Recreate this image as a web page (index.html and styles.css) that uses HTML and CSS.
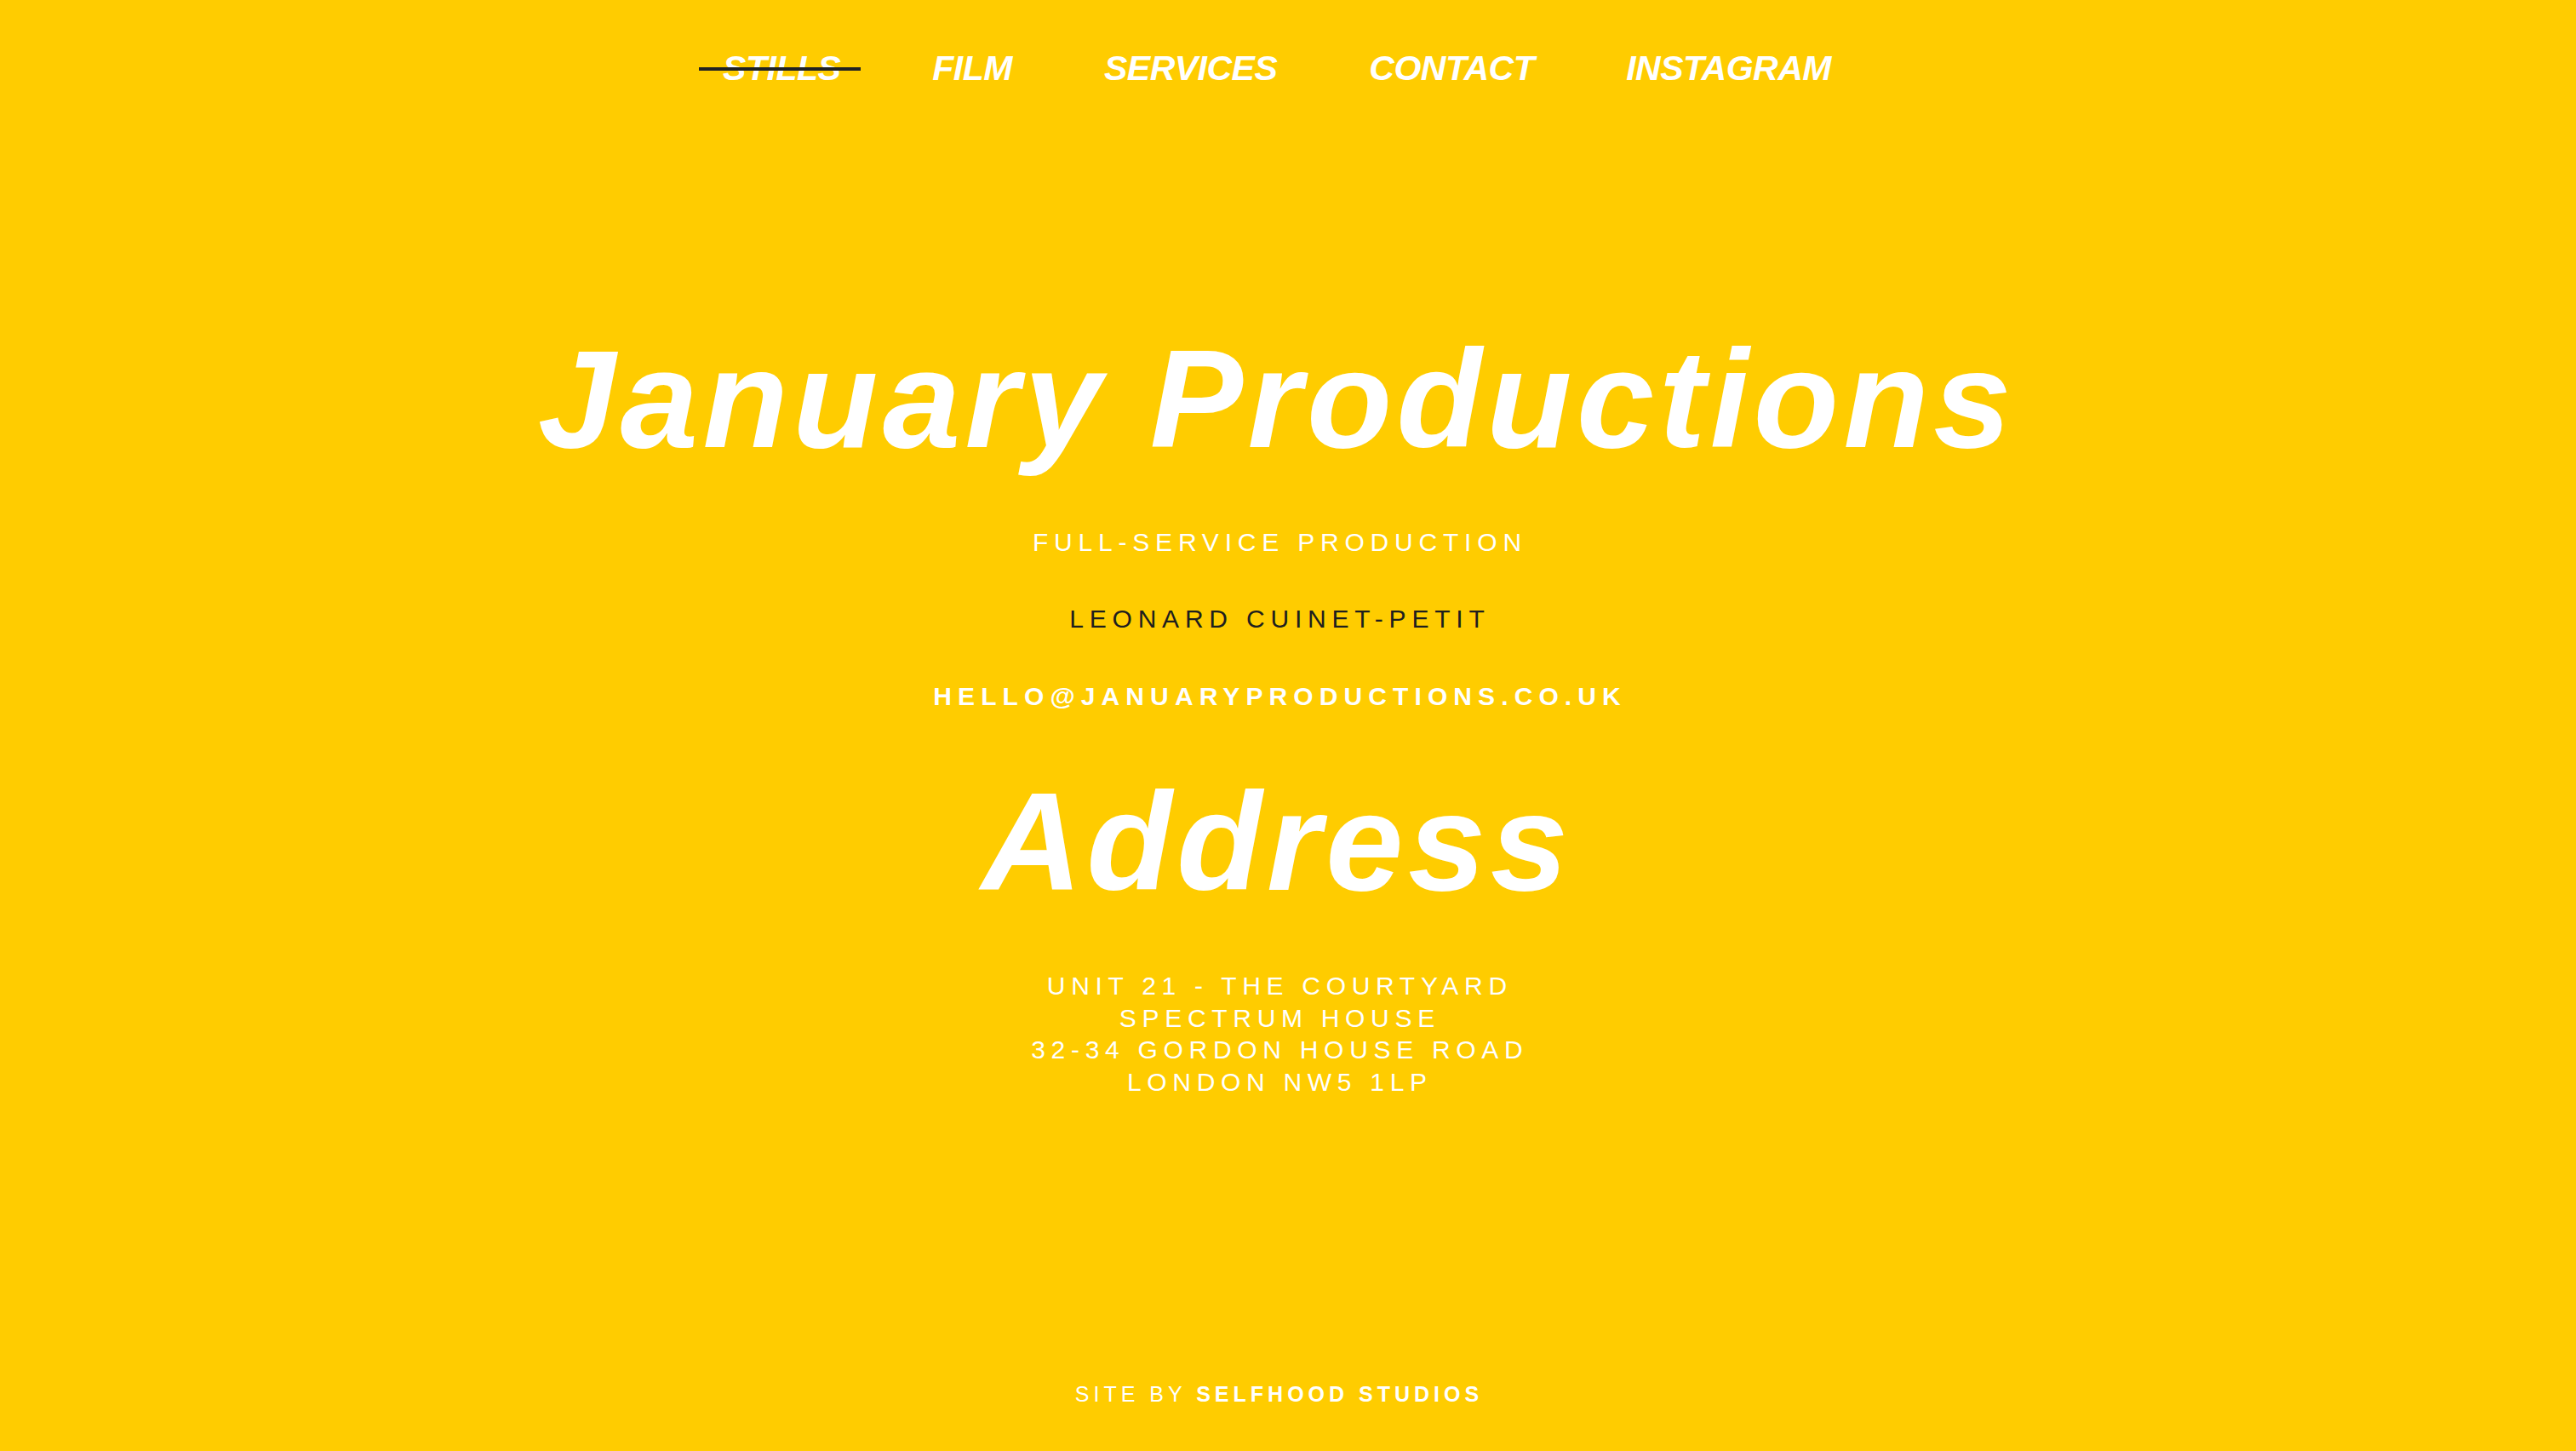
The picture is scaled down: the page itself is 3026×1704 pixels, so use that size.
FILE: index.html
```html
<!DOCTYPE html>
<html lang="en">
<head>
<meta charset="utf-8">
<title>January Productions — Contact</title>
<link rel="stylesheet" href="styles.css">
</head>
<body>
<div class="page">
  <nav class="nav">
    <a class="nav-link is-active" href="#">STILLS</a>
    <a class="nav-link" href="#">FILM</a>
    <a class="nav-link" href="#">SERVICES</a>
    <a class="nav-link" href="#">CONTACT</a>
    <a class="nav-link" href="#">INSTAGRAM</a>
  </nav>
  <main class="content">
    <h1 class="heading heading-title">January Productions</h1>
    <p class="line line-sub">FULL-SERVICE PRODUCTION</p>
    <p class="line line-name">LEONARD CUINET-PETIT</p>
    <p class="line line-email">HELLO@JANUARYPRODUCTIONS.CO.UK</p>
    <h2 class="heading heading-address">Address</h2>
    <address class="address">
      <span>UNIT 21 - THE COURTYARD</span>
      <span>SPECTRUM HOUSE</span>
      <span>32-34 GORDON HOUSE ROAD</span>
      <span>LONDON NW5 1LP</span>
    </address>
  </main>
  <footer class="footer">SITE BY <strong>SELFHOOD STUDIOS</strong></footer>
</div>
</body>
</html>
```
FILE: styles.css
```css
html, body {
  margin: 0;
  padding: 0;
}
body {
  background: #ffcc00;
  color: #ffffff;
  font-family: "Liberation Sans", Arial, sans-serif;
}
.page {
  min-height: 100vh;
  display: flex;
  flex-direction: column;
  align-items: center;
  box-sizing: border-box;
  padding-right: 26px;
}
.nav {
  display: flex;
  justify-content: center;
  gap: 108px;
  padding-top: 59px;
}
.nav-link {
  position: relative;
  color: #ffffff;
  text-decoration: none;
  font-weight: 700;
  font-style: italic;
  font-size: 41px;
  line-height: 42px;
  letter-spacing: -0.5px;
}
.nav-link.is-active::after {
  content: "";
  position: absolute;
  left: -28px;
  right: -24px;
  top: 20px;
  height: 4px;
  background: #222222;
}
.content {
  display: flex;
  flex-direction: column;
  align-items: center;
  text-align: center;
}
.heading {
  margin: 0;
  font-weight: 700;
  font-style: italic;
  font-size: 164px;
  line-height: 164px;
  letter-spacing: 5.5px;
}
.heading-title {
  margin-top: 286px;
}
.line {
  margin: 0;
  font-size: 30px;
  line-height: 30px;
  letter-spacing: 6.8px;
  padding-left: 6.8px;
}
.line-sub {
  margin-top: 71px;
}
.line-name {
  margin-top: 60px;
  color: #1e1e1e;
}
.line-email {
  margin-top: 61px;
  font-weight: 700;
  letter-spacing: 7.1px;
  padding-left: 7.1px;
}
.heading-address {
  margin-top: 74px;
}
.address {
  display: flex;
  flex-direction: column;
  align-items: center;
  margin-top: 68px;
  padding-left: 6.7px;
  font-style: normal;
  font-size: 30px;
  line-height: 37.5px;
  letter-spacing: 6.7px;
}
.footer {
  margin-top: auto;
  padding-bottom: 54px;
  padding-left: 5px;
  font-size: 25px;
  line-height: 25px;
  letter-spacing: 5px;
}
.footer strong {
  font-weight: 700;
}
```
